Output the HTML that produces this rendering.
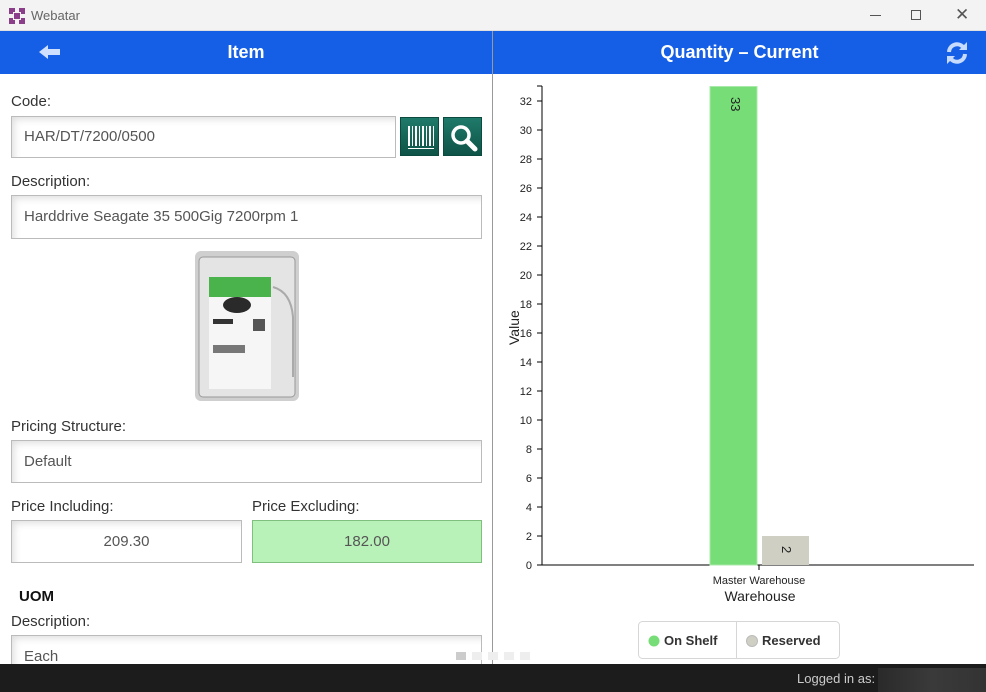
<!DOCTYPE html>
<html><head><meta charset="utf-8"><style>
*{box-sizing:border-box;margin:0;padding:0}
body{width:986px;height:692px;overflow:hidden;background:#fff;font-family:"Liberation Sans",sans-serif;position:relative}
.a{position:absolute}
.title{left:0;top:0;width:986px;height:31px;background:#f3f3f3;border-bottom:1px solid #e0e0e0}
.hdr{top:31px;height:43px;background:#155fe6;color:#fff;font-weight:bold;font-size:18px;line-height:43px;text-align:center}
.lbl{font-size:15px;color:#333}
.inp{border:1px solid #bbb;background:#fff;font-size:15px;color:#555;padding-left:12px;box-shadow:inset 6px 6px 8px -4px #ddd}
.btn{background:linear-gradient(#1f7a6a,#0e5347);border:1px solid #0b4a3f}
</style></head><body>
<div class="a title">
 <svg class="a" style="left:8px;top:7px" width="18" height="18" viewBox="0 0 18 18"><path d="M1 1h6v4H5v2H1zM11 1h6v6h-4V5h-2zM1 11h4v2h2v4H1zM13 11h4v6h-6v-4h2zM6 6h6v6H6z" fill="#8b3f8a"/></svg>
 <div class="a" style="left:31px;top:8px;font-size:13px;color:#666">Webatar</div>
 <div class="a" style="left:870px;top:15px;width:11px;height:1px;background:#555"></div>
 <div class="a" style="left:911px;top:10px;width:10px;height:10px;border:1px solid #555"></div>
 <div class="a" style="left:955px;top:5px;font-size:17px;color:#555">✕</div>
</div>
<div class="a hdr" style="left:0;width:492px">Item</div>
<svg class="a" style="left:38px;top:44px" width="24" height="16" viewBox="0 0 24 16"><path d="M1 8L10 1v4h12v6H10v4z" fill="#cfe0ff"/></svg>
<div class="a hdr" style="left:493px;width:493px">Quantity – Current</div>
<svg class="a" style="left:944px;top:40px" width="26" height="26" viewBox="0 0 26 26" fill="none" stroke="#c7dbff" stroke-width="4"><path d="M5 12a8 8 0 0 1 14-5"/><path d="M21 14a8 8 0 0 1-14 5"/><path d="M23 2v8h-8z" fill="#c7dbff" stroke="none"/><path d="M3 24v-8h8z" fill="#c7dbff" stroke="none"/></svg>
<div class="a" style="left:492px;top:31px;width:1px;height:633px;background:#999"></div>

<div class="a lbl" style="left:11px;top:93px">Code:</div>
<div class="a inp" style="left:11px;top:116px;width:385px;height:42px;line-height:40px">HAR/DT/7200/0500</div>
<div class="a btn" style="left:400px;top:117px;width:39px;height:39px"><svg width="39" height="39"><g fill="#fff"><rect x="7" y="8" width="2" height="20"/><rect x="11" y="8" width="1" height="20"/><rect x="14" y="8" width="2" height="20"/><rect x="18" y="8" width="1" height="20"/><rect x="21" y="8" width="2" height="20"/><rect x="25" y="8" width="1" height="20"/><rect x="28" y="8" width="2" height="20"/><rect x="32" y="8" width="1" height="20"/><rect x="7" y="30" width="26" height="1"/></g></svg></div>
<div class="a btn" style="left:443px;top:117px;width:39px;height:39px"><svg width="39" height="39"><circle cx="17" cy="17" r="8" fill="none" stroke="#fff" stroke-width="3.5"/><path d="M23 23l8 8" stroke="#fff" stroke-width="5" stroke-linecap="round"/></svg></div>
<div class="a lbl" style="left:11px;top:173px">Description:</div>
<div class="a inp" style="left:11px;top:195px;width:471px;height:44px;line-height:42px">Harddrive Seagate 35 500Gig 7200rpm 1</div>
<svg class="a" style="left:193px;top:247px" width="108" height="157" viewBox="0 0 108 157"><rect x="2" y="4" width="104" height="150" rx="6" fill="#cfcfcf"/><rect x="6" y="10" width="96" height="140" rx="4" fill="#e4e4e4" stroke="#999"/><rect x="16" y="30" width="62" height="112" fill="#f6f6f6"/><rect x="16" y="30" width="62" height="20" fill="#4bb34b"/><ellipse cx="44" cy="58" rx="14" ry="8" fill="#2a2a2a"/><rect x="20" y="72" width="20" height="5" fill="#333"/><rect x="60" y="72" width="12" height="12" fill="#555"/><rect x="20" y="98" width="32" height="8" fill="#777"/><path d="M80 40q18 5 20 30v60" fill="none" stroke="#aaa" stroke-width="2"/></svg>
<div class="a lbl" style="left:11px;top:418px">Pricing Structure:</div>
<div class="a inp" style="left:11px;top:440px;width:471px;height:43px;line-height:41px">Default</div>
<div class="a lbl" style="left:11px;top:498px">Price Including:</div>
<div class="a lbl" style="left:252px;top:498px">Price Excluding:</div>
<div class="a inp" style="left:11px;top:520px;width:231px;height:43px;line-height:41px;text-align:center;padding:0">209.30</div>
<div class="a inp" style="left:252px;top:520px;width:230px;height:43px;line-height:41px;text-align:center;padding:0;background:#b9f2b9;border-color:#7fc07f;box-shadow:none">182.00</div>
<div class="a" style="left:19px;top:588px;font-size:15px;font-weight:bold;color:#111">UOM</div>
<div class="a lbl" style="left:11px;top:613px">Description:</div>
<div class="a inp" style="left:11px;top:635px;width:471px;height:40px;padding-top:12px">Each</div>
<div class="a" style="left:456px;top:652px;width:10px;height:8px;background:#ccc"></div>
<div class="a" style="left:472px;top:652px;width:10px;height:8px;background:#eee"></div>
<div class="a" style="left:488px;top:652px;width:10px;height:8px;background:#eee"></div>
<div class="a" style="left:504px;top:652px;width:10px;height:8px;background:#eee"></div>
<div class="a" style="left:520px;top:652px;width:10px;height:8px;background:#eee"></div>

<svg class="a" style="left:0;top:0" width="986" height="664" font-family="Liberation Sans,sans-serif">
<g font-size="11" fill="#222" text-anchor="end">
<text x="532" y="569">0</text><text x="532" y="540">2</text><text x="532" y="511">4</text><text x="532" y="482">6</text><text x="532" y="453">8</text><text x="532" y="424">10</text><text x="532" y="395">12</text><text x="532" y="366">14</text><text x="532" y="337">16</text><text x="532" y="308">18</text><text x="532" y="279">20</text><text x="532" y="250">22</text><text x="532" y="221">24</text><text x="532" y="192">26</text><text x="532" y="163">28</text><text x="532" y="134">30</text><text x="532" y="105">32</text>
</g>
<g stroke="#000" fill="none"><path d="M542 86V565H974"/><path d="M537 565h5M537 536h5M537 507h5M537 478h5M537 449h5M537 420h5M537 391h5M537 362h5M537 333h5M537 304h5M537 275h5M537 246h5M537 217h5M537 188h5M537 159h5M537 130h5M537 101h5M537 86h5M759 565v5"/></g>
<rect x="710" y="86.5" width="47" height="478.5" fill="#77dd77" stroke="#a8e8a8"/>
<rect x="762" y="536" width="47" height="29" fill="#cfcfc4"/>
<text transform="translate(731,97) rotate(90)" font-size="13" fill="#222">33</text>
<text transform="translate(782,546) rotate(90)" font-size="13" fill="#222">2</text>
<text x="759" y="584" font-size="11" fill="#222" text-anchor="middle">Master Warehouse</text>
<text x="760" y="601" font-size="14" fill="#222" text-anchor="middle">Warehouse</text>
<text transform="translate(519,345) rotate(-90)" font-size="14" fill="#222">Value</text>
<rect x="638.5" y="621.5" width="201" height="37" rx="4" fill="#fff" stroke="#d6d6d6"/>
<path d="M736.5 622v36" stroke="#d6d6d6"/>
<circle cx="654" cy="641" r="5.5" fill="#77dd77"/><circle cx="752" cy="641" r="5.5" fill="#cfcfc4" stroke="#bbb"/>
<text x="664" y="645" font-size="13" font-weight="bold" fill="#333">On Shelf</text>
<text x="762" y="645" font-size="13" font-weight="bold" fill="#333">Reserved</text>
</svg>

<div class="a" style="left:0;top:664px;width:986px;height:28px;background:#1c1c1c"></div>
<div class="a" style="left:797px;top:671px;font-size:13px;color:#ccc">Logged in as:</div>
<div class="a" style="left:878px;top:668px;width:108px;height:24px;background:linear-gradient(90deg,#2a2a2a,#3a3a3a,#333)"></div>
</body></html>
